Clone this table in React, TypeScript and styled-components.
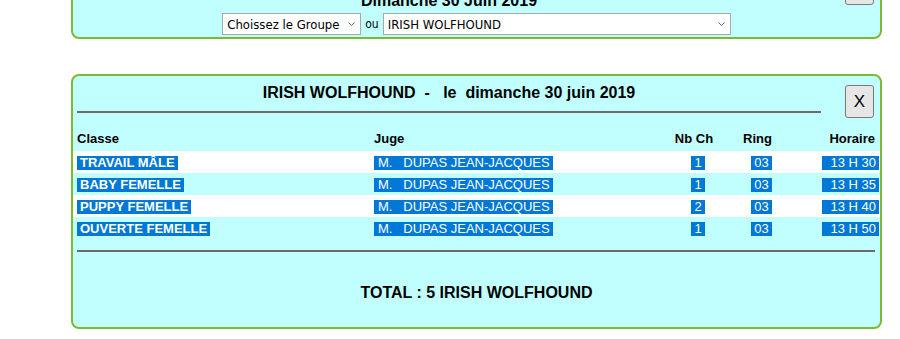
import React from 'react';
import styled, { createGlobalStyle } from 'styled-components';

const GlobalStyle = createGlobalStyle`
  body {
    margin: 0;
    background: #fff;
    color: #000;
    font-family: "Liberation Sans", Arial, sans-serif;
    overflow: hidden;
  }
`;

const Page = styled.div`
  padding-left: 71px;
`;

// panneau cyan à bord vert
const Card = styled.div<{ $top: number }>`
  box-sizing: border-box;
  width: 811px;
  margin-top: ${props => props.$top}px;
  background: #c1ffff;
  border: 2px solid #7dba34;
  border-radius: 8px;
`;

const Header = styled.div`
  display: grid;
  grid-template-columns: 1fr 59px;
  padding-left: 4px;
`;

const TitleCell = styled.div<{ $pad: number }>`
  padding-top: ${props => props.$pad}px;
`;

const Title = styled.div`
  font-size: 16px;
  font-weight: bold;
  line-height: 18px;
  text-align: center;
  white-space: pre;
`;

const Rule = styled.div<{ $margin: string }>`
  height: 2px;
  background: #6b6b6b;
  margin: ${props => props.$margin};
`;

const CloseButton = styled.button`
  justify-self: end;
  align-self: start;
  box-sizing: border-box;
  width: 29px;
  height: 33px;
  margin: 9px 6px 0 0;
  padding: 0;
  border: 1px solid #7a7a7a;
  border-radius: 3px;
  background: #e6e6e6;
  color: #000;
  font: 17px "Liberation Sans", Arial, sans-serif;
`;

// choix du groupe / de la race
const Picker = styled.div`
  display: flex;
  justify-content: center;
  align-items: center;
  gap: 4px;
  margin-top: 3px;
  padding-bottom: 2px;
`;

const SelectWrap = styled.div<{ $w: number }>`
  position: relative;
  width: ${props => props.$w}px;
  height: 22px;
  svg {
    position: absolute;
    right: 6px;
    top: 9px;
    pointer-events: none;
  }
`;

const Select = styled.select`
  appearance: none;
  box-sizing: border-box;
  width: 100%;
  height: 22px;
  margin: 0;
  padding: 0 0 0 4px;
  border: 1px solid #a9a9a9;
  border-radius: 0;
  background: #fff;
  color: #000;
  font: 13px "DejaVu Sans Condensed", "DejaVu Sans", sans-serif;
  outline: none;
`;

const Or = styled.span`
  font: 12px "DejaVu Sans Condensed", "DejaVu Sans", sans-serif;
  color: #000;
`;

// tableau des classes
const Row = styled.div<{ $white?: boolean }>`
  display: grid;
  grid-template-columns: 297px 290px 68px 59px 1fr;
  align-items: center;
  height: 22px;
  background: ${props => (props.$white ? '#fff' : 'transparent')};
  font-size: 13px;
`;

const HeadRow = styled(Row)`
  box-sizing: border-box;
  margin-top: 11px;
  padding-bottom: 3px;
  font-weight: bold;
`;

const Cell = styled.div<{ $align?: 'left' | 'center' | 'right'; $pl?: number; $pr?: number }>`
  text-align: ${props => props.$align ?? 'left'};
  padding-left: ${props => props.$pl ?? 0}px;
  padding-right: ${props => props.$pr ?? 0}px;
  white-space: nowrap;
`;

const Mark = styled.span<{ $bold?: boolean; $lead?: number }>`
  display: inline-block;
  height: 14px;
  line-height: 14px;
  padding: 0 3px 0 ${props => props.$lead ?? 3}px;
  background: #0078d7;
  color: #fff;
  font-weight: ${props => (props.$bold ? 'bold' : 'normal')};
  white-space: pre;
`;

const Total = styled.div`
  margin-top: 32px;
  padding-bottom: 25px;
  font-size: 16px;
  font-weight: bold;
  line-height: 18px;
  text-align: center;
`;

const Chevron = () => (
  <svg width="7" height="4" viewBox="0 0 7 4">
    <polyline points="0.5,0.5 3.5,3.5 6.5,0.5" fill="none" stroke="#6d6d6d" strokeWidth="1" />
  </svg>
);

type Engagement = {
  classe: string;
  juge: string;
  nb: number;
  ring: string;
  heure: string;
};

const engagements: Engagement[] = [
  { classe: 'TRAVAIL MÂLE', juge: 'M.   DUPAS JEAN-JACQUES', nb: 1, ring: '03', heure: '13 H 30' },
  { classe: 'BABY FEMELLE', juge: 'M.   DUPAS JEAN-JACQUES', nb: 1, ring: '03', heure: '13 H 35' },
  { classe: 'PUPPY FEMELLE', juge: 'M.   DUPAS JEAN-JACQUES', nb: 2, ring: '03', heure: '13 H 40' },
  { classe: 'OUVERTE FEMELLE', juge: 'M.   DUPAS JEAN-JACQUES', nb: 1, ring: '03', heure: '13 H 50' },
];

function App(): JSX.Element {
  const total = engagements.reduce((n, e) => n + e.nb, 0);
  return (
    <Page>
      <GlobalStyle />
      <Card $top={-39}>
        <Header>
          <TitleCell $pad={29}>
            <Title>Dimanche 30 Juin 2019</Title>
          </TitleCell>
          <CloseButton>X</CloseButton>
        </Header>
        <Picker>
          <SelectWrap $w={139}>
            <Select defaultValue="">
              <option value="">Choissez le Groupe</option>
            </Select>
            <Chevron />
          </SelectWrap>
          <Or>ou</Or>
          <SelectWrap $w={348}>
            <Select defaultValue="iw">
              <option value="iw">IRISH WOLFHOUND</option>
            </Select>
            <Chevron />
          </SelectWrap>
        </Picker>
      </Card>

      <Card $top={35}>
        <Header>
          <TitleCell $pad={8}>
            <Title>{'IRISH WOLFHOUND  -   le  dimanche 30 juin 2019'}</Title>
            <Rule $margin="9px 0 0 0" />
          </TitleCell>
          <CloseButton>X</CloseButton>
        </Header>

        <HeadRow>
          <Cell $pl={4}>Classe</Cell>
          <Cell $pl={4}>Juge</Cell>
          <Cell $align="center">Nb Ch</Cell>
          <Cell $align="center">Ring</Cell>
          <Cell $align="right" $pr={5}>Horaire</Cell>
        </HeadRow>
        {engagements.map((e, i) => (
          <Row key={e.classe} $white={i % 2 === 0}>
            <Cell $pl={4}>
              <Mark $bold>{e.classe}</Mark>
            </Cell>
            <Cell $pl={4}>
              <Mark $lead={4}>{e.juge}</Mark>
            </Cell>
            <Cell $align="center" $pl={8}>
              <Mark>{e.nb}</Mark>
            </Cell>
            <Cell $align="center" $pl={8}>
              <Mark>{e.ring}</Mark>
            </Cell>
            <Cell $align="right" $pr={1}>
              <Mark $lead={8}>{e.heure}</Mark>
            </Cell>
          </Row>
        ))}

        <Rule $margin="11px 5px 0 4px" />
        <Total>TOTAL : {total} IRISH WOLFHOUND</Total>
      </Card>
    </Page>
  );
}

export default App;
